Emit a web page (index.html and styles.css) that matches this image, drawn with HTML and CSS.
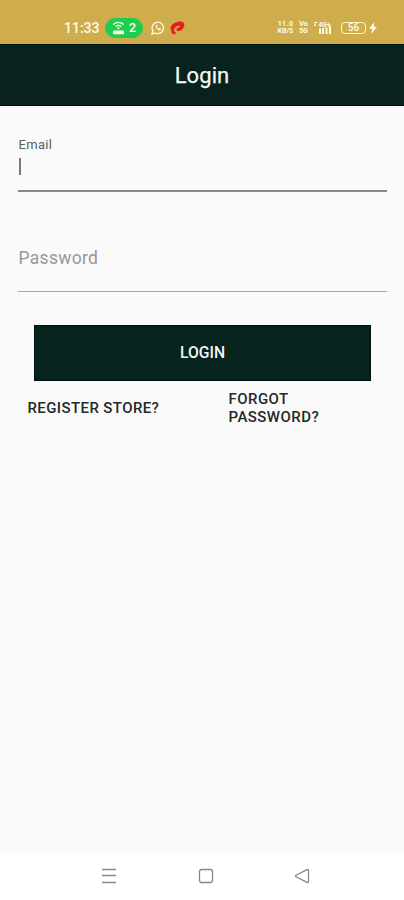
FILE: index.html
```html
<!DOCTYPE html>
<html lang="en">
<head>
<meta charset="utf-8">
<meta name="viewport" content="width=device-width, initial-scale=1">
<title>Login</title>
<link rel="stylesheet" href="styles.css">
</head>
<body>
<div class="screen">
  <div class="status">
    <span class="time">11:33</span>
    <span class="hotspot">
      <svg width="13" height="14" viewBox="0 0 13 14" fill="none" stroke="currentColor" stroke-width="1.3"><path d="M1.2 3.6Q6.5-.9 11.8 3.6M3.5 5.6Q6.5 3.2 9.5 5.6"/><path d="M4.8 6.4h3.4L6.5 8.6z" fill="currentColor" stroke="none"/><rect x="1" y="9.6" width="11" height="3.6" rx="1" fill="currentColor" stroke="none"/></svg>
      <span>2</span>
    </span>
    <svg class="whatsapp" width="14" height="14" viewBox="0 0 14 14" fill="none" stroke="currentColor" stroke-width="1.3"><path d="M1 13l.9-3.2A5.7 5.7 0 1 1 4.3 12z"/><path d="M4.800 4.200c-.7 2.300 2 5.300 4.600 5l.6-1.400-1.600-.9-.8.7c-.8-.3-1.500-1.100-1.700-1.800l.6-.7-.7-1.400z" fill="currentColor" stroke="none"/></svg>
    <svg class="carrier" width="15" height="14" viewBox="0 0 15 14" fill="currentColor"><path d="M.5 6.500C1.500 3 6 .5 10 .5c3.800 0 5.200 2.800 3.800 5.800-1.200 2.700-4 4.200-6.300 3.700-1.500-.3-1.500-1.700-.3-2.700 1-.8 2.600-1.100 3-2C9.400 4.300 6.300 5 4.700 7.300 3.500 9 4 10.200 5.600 11.300 6.200 12 5.400 13.500 4 13.200 1.800 12.600.8 10.900 1.500 9 .6 8.500.2 7.600.5 6.500z"/></svg>
    <span class="speed"><span>11.0</span><span>KB/S</span></span>
    <span class="volte"><span>Vo</span><span>5G</span></span>
    <svg class="signal" width="20" height="14" viewBox="0 0 20 14" fill="currentColor"><path d="M1 1h3v1.200H1zM1 3.500h2v1.200H1zM6 7.500h2V13H6zM9 7h2v6H9zM12.500 6.500h2V13h-2zM16 4.500h2V13h-2z"/><text class="signal-label" x="5.500" y="5.700">4G+</text></svg>
    <span class="battery">56</span>
    <svg class="bolt" width="8" height="12" viewBox="0 0 8 12" fill="currentColor"><path d="M5.2 0L0 6.800h3L2.300 12 8 4.800H4.800z"/></svg>
  </div>
  <header class="bar"><h1>Login</h1></header>
  <main class="form">
    <label class="field email"><span>Email</span><i class="caret"></i></label>
    <label class="field password"><span>Password</span></label>
    <button class="submit" type="button">LOGIN</button>
    <div class="links">
      <a class="register">REGISTER STORE?</a>
      <a class="forgot">FORGOT<br>PASSWORD?</a>
    </div>
  </main>
  <nav class="nav">
    <svg width="16" height="16" viewBox="0 0 16 16"><path d="M1 1.5h14M1 7.500h14M1 14.500h14"/></svg>
    <svg width="16" height="16" viewBox="0 0 16 16"><rect x="1.500" y="1.500" width="13" height="13" rx="2.200"/></svg>
    <svg width="16" height="16" viewBox="0 0 16 16"><path d="M13 1.700Q14.500 1 14.500 2.700v10.600q0 1.700-1.500 1L2 8.800Q1 8 2 7.200z"/></svg>
  </nav>
</div>
</body>
</html>
```
FILE: styles.css
```css
* { box-sizing: border-box; }
body { margin: 0; font-family: Roboto, "Liberation Sans", sans-serif; background: #fafafa; }
.screen { width: 404px; height: 900px; display: flex; flex-direction: column; overflow: hidden; }

.status {
  height: 44px; flex: none; display: flex; align-items: center;
  padding: 12px 0 0 64px; background: #d0ad4c; color: #fffbe5;
}
.time { width: 41px; font: 500 14px/16px Roboto, sans-serif; white-space: nowrap; }
.hotspot {
  width: 38px; height: 20px; border-radius: 10px; background: #20cc4f;
  display: flex; align-items: center; justify-content: center; gap: 4px;
  font: 500 13px/20px Roboto, sans-serif;
}
.whatsapp { margin-left: 8px; }
.carrier { margin-left: 5px; color: #e5201c; }
.speed, .volte { display: flex; flex-direction: column; align-items: center; font-weight: 700; line-height: 7px; }
.speed { width: 17px; margin-left: 92px; font-size: 7px; }
.speed span:first-child { letter-spacing: .4px; }
.volte { width: 9px; margin-left: 5px; font-size: 7px; }
.signal { margin-left: 5px; }
.signal-label { font: 700 6.5px Roboto, sans-serif; }
.battery {
  width: 25px; height: 12px; margin-left: 8px; border: 1.4px solid #fff6d0; border-radius: 4px;
  font: 500 10px/10px Roboto, sans-serif; text-align: center;
}
.bolt { margin-left: 3px; }

.bar {
  height: 62px; flex: none; display: flex; align-items: center; justify-content: center;
  background: #08231e; border-top: 1px solid #001510; border-bottom: 1px solid #000c09; color: #f5f8f7;
}
.bar h1 { margin: 2px 0 0; font-size: 22px; line-height: 26px; font-weight: 400; letter-spacing: .1px; -webkit-text-stroke: .25px currentColor; }

.form { flex: 1; padding: 30px 17px 0 18px; background: #fafafa; }
.field { display: block; padding-left: .5px; }
.email { height: 56px; border-bottom: 2px solid #858b89; }
.email span { display: block; height: 22px; font-size: 13px; line-height: 17px; letter-spacing: .3px; color: #59605e; }
.caret { display: block; width: 2px; height: 17px; background: #777b7a; }
.password { height: 100px; padding-top: 55px; border-bottom: 1px solid #a5a7a6; }
.password span { font-size: 17.5px; line-height: 22px; letter-spacing: .3px; color: #969897; }
.submit {
  display: block; width: 337px; height: 56px; margin: 33px 0 0 16px; padding: 0 0 1px;
  border: 1px solid #000f0b; border-radius: 0; background: #06231d; color: #f2f5f4;
  font: 500 15.7px/20px Roboto, sans-serif;
}
.links { display: flex; align-items: center; margin-top: 9px; padding-left: 9.5px; font-size: 15px; line-height: 18px; font-weight: 500; color: #222927; }
.register { width: 201px; letter-spacing: .4px; }
.forgot { letter-spacing: .45px; }

.nav { height: 48px; flex: none; display: flex; align-items: center; gap: 80.5px; padding: 0 0 0 101.4px; background: #fff; }
.nav svg { fill: none; stroke: #888; stroke-width: 1.3; }
```
